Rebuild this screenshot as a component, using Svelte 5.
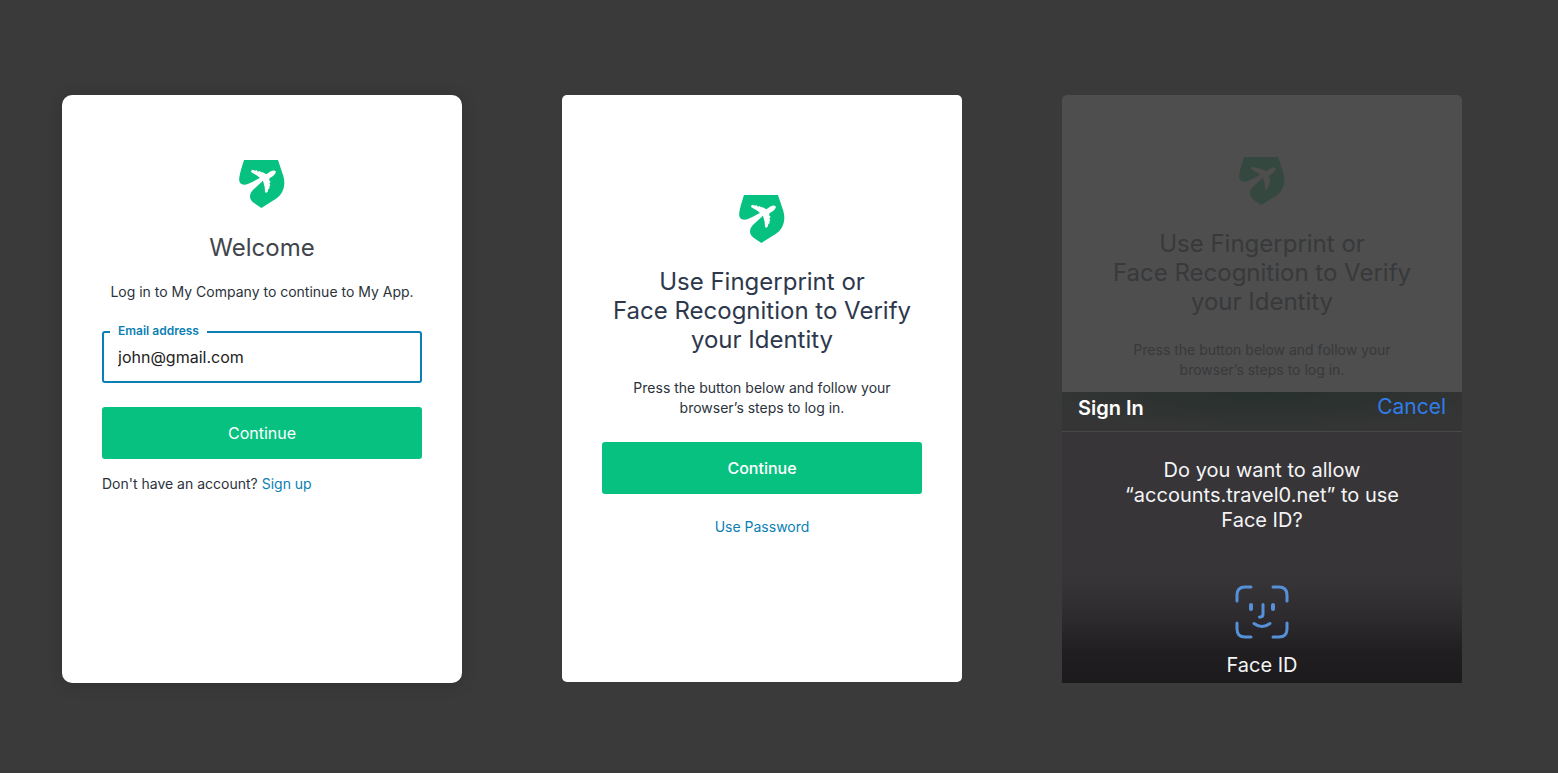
<script lang="ts">
  let email = $state('john@gmail.com');
</script>

{#snippet logo()}
  <svg class="logo" viewBox="51 30 138 144" aria-hidden="true">
    <path
      class="shield"
      d="M66 30H168L184 78C188 92 188 104 184 117C180 130 173 139 162 146L118 174L96 159C88 154 84 148 84 139C84 130 89 124 95 118L126 89L119 81L91 96C81 101 74 104 67 104C54 104 50 95 52 82C54 67 60 49 66 30Z"
    />
    <path
      class="plane"
      d="M87 62L92 59L100 62L103 60L108 65L113 63L117 67L122 67L133 73L143 66C151 61 158 60 161 64C163 69 156 76 150 80L142 85L142 92L146 95L142 101L145 105L142 110L143 115L139 117L137 125L132 129L129 125L128 111L123 92L114 84L106 77L88 67Z"
    />
  </svg>
{/snippet}

{#snippet verifyText()}
  {@render logo()}
  <h2 class="title">Use Fingerprint or<br />Face Recognition to Verify<br />your Identity</h2>
  <p class="text">Press the button below and follow your<br />browser’s steps to log in.</p>
{/snippet}

<main class="screens">
  <form class="card login" onsubmit={(e) => e.preventDefault()}>
    {@render logo()}
    <h1 class="title">Welcome</h1>
    <p class="text">Log in to My Company to continue to My App.</p>
    <div class="field">
      <label for="email">Email address</label>
      <input id="email" type="email" bind:value={email} />
    </div>
    <button class="primary" type="submit">Continue</button>
    <p class="text signup">Don't have an account? <a href="#signup">Sign up</a></p>
  </form>

  <section class="card verify">
    {@render verifyText()}
    <button class="primary medium" type="button">Continue</button>
    <a class="text" href="#password">Use Password</a>
  </section>

  <section class="device">
    <div class="dimmed">
      {@render verifyText()}
    </div>
    <div class="sheet">
      <header class="sheet-header">
        <h2>Sign In</h2>
        <button class="cancel" type="button">Cancel</button>
      </header>
      <p class="prompt">Do you want to allow<br />“accounts.travel0.net” to use<br />Face ID?</p>
      <svg class="face" viewBox="0 0 54 54" aria-hidden="true">
        <path d="M2 16V10Q2 2 10 2H16M38 2H44Q52 2 52 10V16M2 38V44Q2 52 10 52H16M38 52H44Q52 52 52 44V38" />
        <path d="M28 19.500V29Q28 32 25 32H24.500M19 38.500Q27 44.500 35 38.500" />
        <path class="eyes" d="M16 20V24M38 20V24" />
      </svg>
      <p class="face-label">Face ID</p>
    </div>
  </section>
</main>

<style>
  :global(body) {
    margin: 0;
    background: #3a3a3a;
  }

  .screens {
    box-sizing: border-box;
    min-height: 100vh;
    display: grid;
    grid-template-columns: repeat(3, minmax(0, 400px));
    align-items: start;
    gap: 100px;
    padding: 95px 62px 90px;
    font-family: Inter, 'Liberation Sans', sans-serif;
  }

  .card {
    box-sizing: border-box;
    display: flex;
    flex-direction: column;
    align-items: center;
    padding: 0 40px;
    background: #fff;
    text-align: center;
  }

  .login {
    min-height: 588px;
    padding-top: 65px;
    border-radius: 10px;
    box-shadow: 0 2px 16px rgba(0, 0, 0, 0.16);
  }

  .verify {
    min-height: 587px;
    padding-top: 100px;
    border-radius: 5px;
  }

  .logo {
    width: 46px;
    height: 48px;
  }

  .shield {
    fill: #07c180;
  }

  .plane {
    fill: #fff;
  }

  .title {
    margin: 24px 0;
    font-size: 24px;
    line-height: 29px;
    font-weight: 400;
    color: #2d384c;
    white-space: nowrap;
  }

  .login .title {
    margin: 25px 0 20px;
    color: #41454c;
  }

  .text {
    margin: 0;
    font-size: 14px;
    line-height: 20px;
    color: #2b323b;
  }

  a,
  a.text {
    color: #0a7fb4;
    text-decoration: none;
  }

  .field {
    position: relative;
    width: 100%;
    margin: 29px 0 24px;
  }

  .field label {
    position: absolute;
    top: -8px;
    left: 8px;
    padding: 0 8px;
    background: #fff;
    color: #0a7fb4;
    font-size: 12px;
    line-height: 16px;
    font-weight: 600;
  }

  .field input {
    box-sizing: border-box;
    display: block;
    width: 100%;
    height: 52px;
    padding: 0 14px;
    border: 2px solid #0a7fb4;
    border-radius: 3px;
    outline: none;
    background: #fff;
    color: #222;
    font: inherit;
    font-size: 16px;
  }

  .primary {
    width: 100%;
    height: 52px;
    padding: 0;
    border: 0;
    border-radius: 3px;
    background: #07c180;
    color: #fff;
    font: inherit;
    font-size: 16px;
    cursor: pointer;
  }

  .medium {
    margin: 24px 0 23px;
    font-weight: 500;
  }

  .signup {
    align-self: flex-start;
    margin-top: 15px;
  }

  .device {
    overflow: hidden;
    border-radius: 5px 5px 0 0;
    text-align: center;
  }

  .dimmed {
    display: flex;
    flex-direction: column;
    align-items: center;
    padding: 62px 40px 12px;
    background: #4e4e4e;
  }

  .dimmed .shield {
    fill: #34483f;
  }

  .dimmed .plane {
    fill: #4e4e4e;
  }

  .dimmed .title,
  .dimmed .text {
    color: #38393b;
  }

  .sheet {
    box-sizing: border-box;
    min-height: 291px;
    background: linear-gradient(#373538 0, #373538 170px, #363437 190px, #2d2b2e 225px, #201e20 260px, #1c1a1c 291px);
    color: #f4f4f5;
  }

  .sheet-header {
    box-sizing: border-box;
    display: flex;
    align-items: flex-start;
    justify-content: space-between;
    height: 40px;
    padding: 0 16px;
    border-bottom: 1px solid #454749;
    background: radial-gradient(ellipse 60% 100% at 52% 0, #26302c, #353536);
  }

  .sheet-header h2 {
    margin: 4px 0 0;
    font-size: 20px;
    line-height: 24px;
    font-weight: 600;
    color: #fff;
  }

  .cancel {
    margin: 3px 0 0;
    padding: 0;
    border: 0;
    background: none;
    color: #307de8;
    font: inherit;
    font-size: 21px;
    line-height: 24px;
    cursor: pointer;
  }

  .prompt {
    margin: 26px 0 52px;
    font-size: 20px;
    line-height: 25px;
  }

  .face {
    display: block;
    width: 54px;
    height: 54px;
    margin: 0 auto;
    fill: none;
    stroke: #5590d8;
    stroke-width: 3;
    stroke-linecap: round;
  }

  .eyes {
    stroke-width: 4;
  }

  .face-label {
    margin: 14px 0 0;
    font-size: 20px;
    line-height: 24px;
  }
</style>
